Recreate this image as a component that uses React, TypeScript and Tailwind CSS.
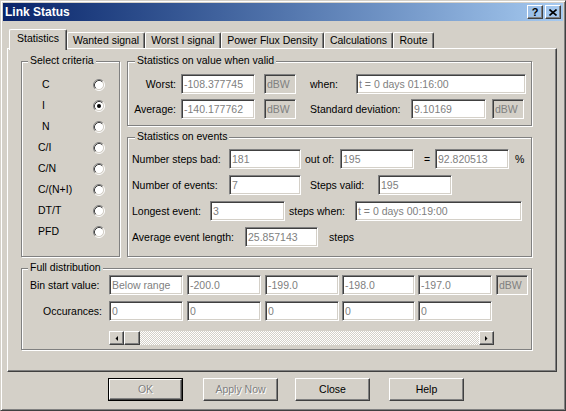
import clsx from 'clsx';
import type { ReactNode } from 'react';

const raised =
  'border border-t-white border-l-white border-r-[#404040] border-b-[#404040] shadow-[inset_-1px_-1px_#808080]';
const sunken =
  'border border-t-[#808080] border-l-[#808080] border-r-white border-b-white shadow-[inset_1px_1px_#404040,inset_-1px_-1px_#d4d0c8]';

function Edit({ value, className, grey }: { value: string; className: string; grey?: boolean }) {
  return (
    <div
      className={clsx(
        'flex h-[20px] items-center overflow-hidden whitespace-nowrap pl-[2px] text-[#808080]',
        sunken,
        grey ? 'bg-[#d4d0c8]' : 'bg-white',
        className,
      )}
    >
      {value}
    </div>
  );
}

function Group({
  title,
  labelLeft,
  className,
  children,
}: {
  title: string;
  labelLeft: string;
  className: string;
  children: ReactNode;
}) {
  return (
    <div className={clsx('relative border border-[#808080] shadow-[1px_1px_#fff,inset_1px_1px_#fff]', className)}>
      <span className={clsx('absolute -top-[8px] bg-[#d4d0c8] px-[2px] leading-[13px] whitespace-nowrap', labelLeft)}>
        {title}
      </span>
      {children}
    </div>
  );
}

function Radio({ checked }: { checked?: boolean }) {
  return (
    <svg width="12" height="12" viewBox="0 0 12 12" className="shrink-0">
      <circle cx="6" cy="6" r="4.5" fill="#fff" />
      <path d="M2.11 9.89A5.5 5.5 0 0 1 9.89 2.11" fill="none" stroke="#808080" />
      <path d="M9.89 2.11A5.5 5.5 0 0 1 2.11 9.89" fill="none" stroke="#fff" />
      <path d="M2.82 9.18A4.5 4.5 0 0 1 9.18 2.82" fill="none" stroke="#404040" />
      <path d="M9.18 2.82A4.5 4.5 0 0 1 2.82 9.18" fill="none" stroke="#d4d0c8" />
      {checked && <circle cx="6" cy="6" r="2" fill="#000" />}
    </svg>
  );
}

function Tab({ label, w, active }: { label: string; w: string; active?: boolean }) {
  return (
    <div
      className={clsx(
        'flex items-center justify-center whitespace-nowrap rounded-t-[2px] border-t border-r border-l border-t-white border-l-white border-r-[#404040] bg-[#d4d0c8] shadow-[inset_-1px_0_#808080]',
        active ? 'relative z-10 -mb-[2px] h-[21px] pb-[3px]' : 'h-[16px]',
        w,
      )}
    >
      {label}
    </div>
  );
}

function Button({ label, className, disabled, isDefault }: { label: string; className: string; disabled?: boolean; isDefault?: boolean }) {
  const text = (
    <span className={disabled ? 'text-[#808080] [text-shadow:1px_1px_0_#fff]' : ''}>{label}</span>
  );
  if (isDefault) {
    return (
      <div className={clsx('h-[23px] w-[75px] border border-black', className)}>
        <div className={clsx('flex h-full items-center justify-center', raised)}>{text}</div>
      </div>
    );
  }
  return <div className={clsx('flex h-[23px] w-[75px] items-center justify-center', raised, className)}>{text}</div>;
}

const criteria = [
  { label: 'C', pad: 'pl-[20px]' },
  { label: 'I', pad: 'pl-[20px]', checked: true },
  { label: 'N', pad: 'pl-[20px]' },
  { label: 'C/I', pad: 'pl-[16px]' },
  { label: 'C/N', pad: 'pl-[16px]' },
  { label: 'C/(N+I)', pad: 'pl-[16px]' },
  { label: 'DT/T', pad: 'pl-[16px]' },
  { label: 'PFD', pad: 'pl-[16px]' },
];

export default function App() {
  return (
    <div className="h-[411px] w-[566px] overflow-hidden border border-t-[#d4d0c8] border-l-[#d4d0c8] border-r-[#404040] border-b-[#404040] bg-[#d4d0c8] p-[2px] font-['Liberation_Sans',Arial,sans-serif] text-[10.5px] leading-[13px] text-black shadow-[inset_1px_1px_#fff,inset_-1px_-1px_#808080] select-none">
      {/* title bar */}
      <div className="flex h-[18px] items-center bg-linear-to-r from-[#0a246a] to-[#a6caf0] pr-[2px] pl-[2px]">
        <span className="text-[12px] font-bold text-white">Link Status</span>
        <div className="ml-auto flex gap-[2px]">
          <div className={clsx('flex h-[14px] w-[16px] items-center justify-center text-[11px] font-bold', raised)}>?</div>
          <div className={clsx('flex h-[14px] w-[16px] items-center justify-center', raised)}>
            <svg width="8" height="7" viewBox="0 0 8 7">
              <path d="M0.5 0.5L7.5 6.5M7.5 0.5L0.5 6.5" stroke="#000" strokeWidth="1.6" />
            </svg>
          </div>
        </div>
      </div>

      <div className="px-[4px]">
        {/* tabs */}
        <div className="mt-[8px] flex h-[19px] items-end pl-[2px]">
          <Tab label="Statistics" w="w-[58px]" active />
          <Tab label="Wanted signal" w="w-[78px]" />
          <Tab label="Worst I signal" w="w-[76px]" />
          <Tab label="Power Flux Density" w="w-[103px]" />
          <Tab label="Calculations" w="w-[69px]" />
          <Tab label="Route" w="w-[41px]" />
        </div>

        {/* tab panel */}
        <div className="h-[324px] w-[550px] border border-t-white border-l-white border-r-[#404040] border-b-[#404040] pt-[12px] pl-[13px] shadow-[inset_-1px_-1px_#808080]">
          <div className="flex">
            <Group title="Select criteria" labelLeft="left-[6px]" className="h-[196px] w-[99px] pt-[12px]">
              {criteria.map((c) => (
                <div key={c.label} className="flex h-[21px] items-center">
                  <span className={clsx('w-[71px]', c.pad)}>{c.label}</span>
                  <Radio checked={c.checked} />
                </div>
              ))}
            </Group>

            <div className="ml-[7px] flex w-[405px] flex-col">
              <Group title="Statistics on value when valid" labelLeft="left-[7px]" className="flex h-[65px] flex-col gap-[5px] pt-[12px]">
                <div className="flex h-[20px] items-center">
                  <span className="w-[48px] text-right">Worst:</span>
                  <Edit value="-108.377745" className="ml-[5px] w-[74px]" />
                  <Edit value="dBW" grey className="ml-[9px] w-[32px]" />
                  <span className="ml-[14px] w-[46px]">when:</span>
                  <Edit value="t = 0 days 01:16:00" className="w-[170px]" />
                </div>
                <div className="flex h-[20px] items-center">
                  <span className="w-[48px] text-right">Average:</span>
                  <Edit value="-140.177762" className="ml-[5px] w-[74px]" />
                  <Edit value="dBW" grey className="ml-[9px] w-[32px]" />
                  <span className="ml-[14px] w-[101px]">Standard deviation:</span>
                  <Edit value="9.10169" className="w-[75px]" />
                  <Edit value="dBW" grey className="ml-[6px] w-[32px]" />
                </div>
              </Group>

              <Group title="Statistics on events" labelLeft="left-[7px]" className="mt-[11px] flex h-[120px] flex-col gap-[6px] pt-[11px]">
                <div className="flex h-[20px] items-center pl-[4px]">
                  <span className="w-[97px]">Number steps bad:</span>
                  <Edit value="181" className="w-[72px]" />
                  <span className="ml-[4px] w-[35px]">out of:</span>
                  <Edit value="195" className="w-[74px]" />
                  <span className="w-[21px] pl-[10px]">=</span>
                  <Edit value="92.820513" className="w-[74px]" />
                  <span className="ml-[6px]">%</span>
                </div>
                <div className="flex h-[20px] items-center pl-[4px]">
                  <span className="w-[97px]">Number of events:</span>
                  <Edit value="7" className="w-[72px]" />
                  <span className="ml-[9px] w-[68px]">Steps valid:</span>
                  <Edit value="195" className="w-[74px]" />
                </div>
                <div className="flex h-[20px] items-center pl-[4px]">
                  <span className="w-[78px]">Longest event:</span>
                  <Edit value="3" className="w-[75px]" />
                  <span className="ml-[4px] w-[66px]">steps when:</span>
                  <Edit value="t = 0 days 00:19:00" className="w-[167px]" />
                </div>
                <div className="flex h-[20px] items-center pl-[4px]">
                  <span className="w-[113px]">Average event length:</span>
                  <Edit value="25.857143" className="w-[73px]" />
                  <span className="ml-[11px]">steps</span>
                </div>
              </Group>
            </div>
          </div>

          <Group title="Full distribution" labelLeft="left-[6px]" className="mt-[11px] h-[82px] w-[511px] pt-[6px]">
            <div className="flex h-[20px] items-center">
              <span className="w-[87px] pl-[8px]">Bin start value:</span>
              <Edit value="Below range" className="w-[74px]" />
              <Edit value="-200.0" className="ml-[4px] w-[74px]" />
              <Edit value="-199.0" className="ml-[4px] w-[74px]" />
              <Edit value="-198.0" className="ml-[3px] w-[73px]" />
              <Edit value="-197.0" className="ml-[3px] w-[74px]" />
              <Edit value="dBW" grey className="ml-[4px] w-[32px]" />
            </div>
            <div className="mt-[6px] flex h-[20px] items-center">
              <span className="w-[87px] pr-[7px] text-right">Occurances:</span>
              <Edit value="0" className="w-[74px]" />
              <Edit value="0" className="ml-[4px] w-[74px]" />
              <Edit value="0" className="ml-[4px] w-[74px]" />
              <Edit value="0" className="ml-[3px] w-[73px]" />
              <Edit value="0" className="ml-[3px] w-[74px]" />
            </div>
            <div className="mt-[10px] ml-[87px] flex h-[14px] w-[385px]">
              <div className={clsx('flex w-[15px] items-center justify-center', raised)}>
                <svg width="3" height="5" viewBox="0 0 3 5">
                  <path d="M3 0V5L0.5 2.5Z" fill="#000" />
                </svg>
              </div>
              <div className={clsx('w-[16px]', raised)} />
              <div className="flex-1 bg-[repeating-conic-gradient(#fff_0%_25%,#d4d0c8_0%_50%)] bg-[length:2px_2px]" />
              <div className={clsx('flex w-[15px] items-center justify-center', raised)}>
                <svg width="3" height="5" viewBox="0 0 3 5">
                  <path d="M0 0V5L2.5 2.5Z" fill="#000" />
                </svg>
              </div>
            </div>
          </Group>
        </div>

        {/* dialog buttons */}
        <div className="mt-[6px] flex">
          <Button label="OK" disabled isDefault className="ml-[101px]" />
          <Button label="Apply Now" disabled className="ml-[20px]" />
          <Button label="Close" className="ml-[17px]" />
          <Button label="Help" className="ml-[19px]" />
        </div>
      </div>
    </div>
  );
}
